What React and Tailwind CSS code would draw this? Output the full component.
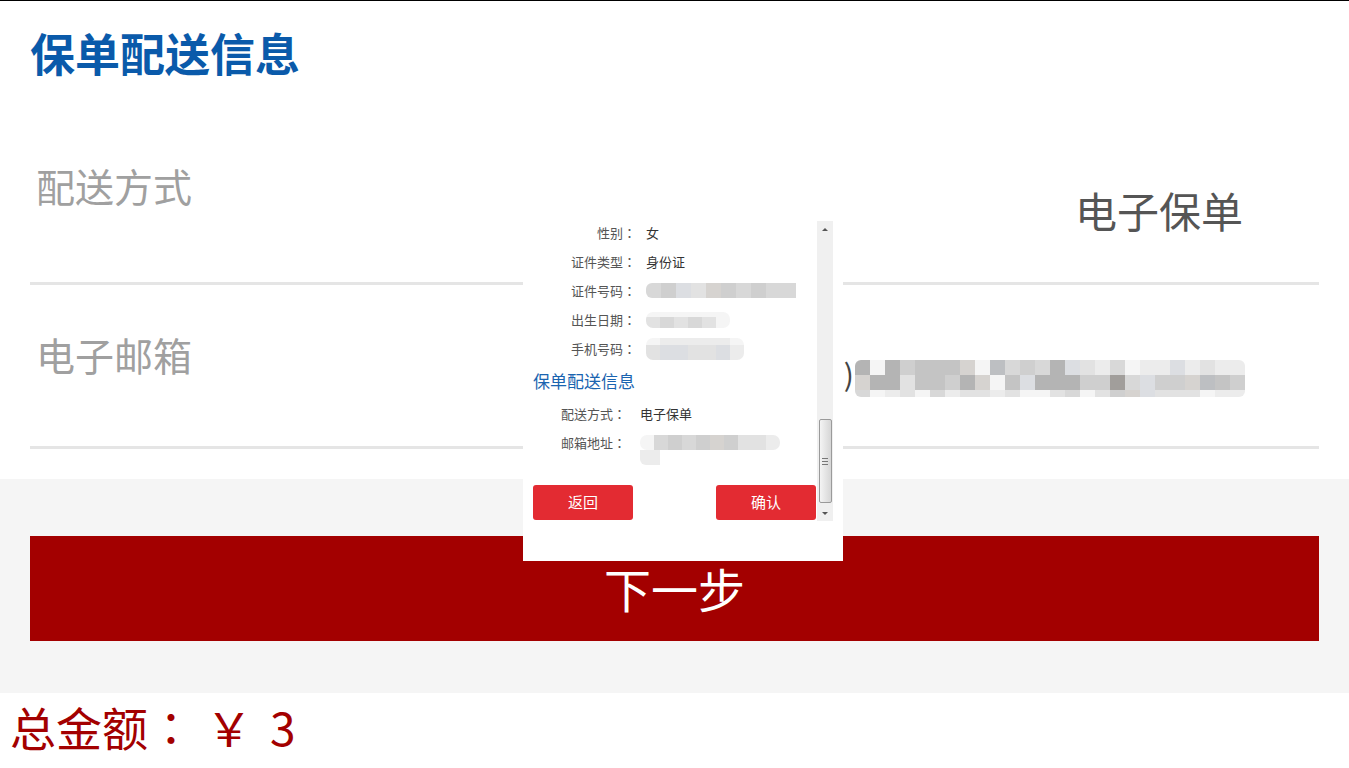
import React from 'react';

const FONT = "font-['Noto_Sans_CJK_SC','Noto_Sans',sans-serif]";

// mosaic palette, used for the blurred (masked) personal data
const P = {
  a: 'bg-[#b4b4b4]',
  b: 'bg-[#c4c4c4]',
  c: 'bg-[#cfcfcf]',
  d: 'bg-[#d8d8d8]',
  e: 'bg-[#e2e2e2]',
  f: 'bg-[#ececec]',
  g: 'bg-[#f5f5f5]',
  h: 'bg-[#a19e9b]',
  i: 'bg-[#dcdee2]',
  j: 'bg-[#bdbfc2]',
  k: 'bg-[#d6d3d0]',
};

function Mosaic({ rows, cell = 'w-[15px]', heights, className = '' }) {
  return (
    <div className={`flex flex-col overflow-hidden ${className}`}>
      {rows.map((row, r) => (
        <div key={r} className="flex">
          {row.split('').map((ch, i) => (
            <div key={i} className={`${cell} ${heights[r]} ${P[ch]}`} />
          ))}
        </div>
      ))}
    </div>
  );
}

function InfoRow({ label, children }) {
  return (
    <div className="flex h-[29px] items-center text-[13px]">
      <div className="w-[113px] text-right text-[#555]">
        {label}
        <span className="font-['Noto_Sans_CJK_TC',sans-serif]">：</span>
      </div>
      <div className="ml-[10px] text-[#333]">{children}</div>
    </div>
  );
}

function Scrollbar() {
  return (
    <div className="flex h-full w-[16px] flex-col items-center bg-[#f0f0f0]">
      <div className="flex h-[16px] w-full items-center justify-center">
        <div className="h-0 w-0 border-x-[3px] border-b-[3px] border-x-transparent border-b-[#555]" />
      </div>
      <div className="flex flex-1 flex-col justify-end px-[1px] pb-[2px]">
        <div className="flex h-[84px] w-[13px] flex-col items-center justify-center gap-[2px] rounded-[2px] border border-[#9a9a9a] bg-gradient-to-r from-[#f4f4f4] to-[#d6d6d6]">
          <div className="h-[1px] w-[6px] bg-[#777]" />
          <div className="h-[1px] w-[6px] bg-[#777]" />
          <div className="h-[1px] w-[6px] bg-[#777]" />
        </div>
      </div>
      <div className="flex h-[16px] w-full items-center justify-center">
        <div className="h-0 w-0 border-x-[3px] border-t-[3px] border-x-transparent border-t-[#555]" />
      </div>
    </div>
  );
}

function ConfirmDialog() {
  return (
    <div className="absolute left-[523px] top-[220px] h-[340px] w-[320px] bg-white">
      <div className="flex h-[300px] w-[310px]">
        <div className="flex flex-1 flex-col">
          <div className="-mt-[3px]">
            <InfoRow label="性别">女</InfoRow>
            <InfoRow label="证件类型">身份证</InfoRow>
            <InfoRow label="证件号码">
              <Mosaic rows={['dciekcdcdd']} heights={['h-[15px]']} className="rounded-l-[6px]" />
            </InfoRow>
            <InfoRow label="出生日期">
              <Mosaic
                rows={['gggggg', 'ededeg']}
                cell="w-[14px]"
                heights={['h-[5px]', 'h-[11px]']}
                className="rounded-[7px]"
              />
            </InfoRow>
            <InfoRow label="手机号码">
              <Mosaic
                rows={['gfffffg', 'eiieeif']}
                cell="w-[14px]"
                heights={['h-[7px]', 'h-[15px]']}
                className="rounded-[7px]"
              />
            </InfoRow>
          </div>
          <div className="flex h-[36px] items-center pl-[10px] text-[17px] text-[#1a64b0]">保单配送信息</div>
          <div className="flex h-[29px] items-center text-[13px]">
            <div className="w-[103px] text-right text-[#555]">
              配送方式<span className="font-['Noto_Sans_CJK_TC',sans-serif]">：</span>
            </div>
            <div className="ml-[14px] text-[#333]">电子保单</div>
          </div>
          <div className="flex h-[29px] items-start pt-[7px] text-[13px]">
            <div className="w-[103px] text-right leading-[15px] text-[#555]">
              邮箱地址<span className="font-['Noto_Sans_CJK_TC',sans-serif]">：</span>
            </div>
            <div className="ml-[14px] flex flex-col">
              <Mosaic rows={['gdcdckceef']} cell="w-[14px]" heights={['h-[15px]']} className="rounded-[7px]" />
              <Mosaic rows={['ff']} cell="w-[10px]" heights={['h-[15px]']} className="rounded-bl-[6px]" />
            </div>
          </div>
          <div className="mt-[28px] flex justify-between pl-[10px] pr-[1px]">
            <button className="h-[35px] w-[100px] rounded-[3px] bg-[#e32b32] text-[15px] text-white">返回</button>
            <button className="h-[35px] w-[100px] rounded-[3px] bg-[#e32b32] text-[15px] text-white">确认</button>
          </div>
        </div>
        <Scrollbar />
      </div>
    </div>
  );
}

export default function App() {
  return (
    <div className={`relative min-h-[768px] w-[1349px] overflow-hidden border-t border-black bg-white ${FONT}`}>
      {/* Title */}
      <div className="h-[99px] px-[30px] pt-[29px]">
        <h1 className="text-[45px] font-bold leading-none text-[#0a5aaa]">保单配送信息</h1>
      </div>

      <div className="px-[30px]">
        {/* Delivery method */}
        <div className="flex h-[182px] items-start justify-between">
          <div className="ml-[6px] mt-[66px] text-[39px] leading-none text-[#a0a0a0]">配送方式</div>
          <div className="mr-[76px] mt-[89px] text-[42px] leading-none text-[#555]">电子保单</div>
        </div>
        <div className="h-[3px] bg-[#e5e5e5]" />

        {/* Email */}
        <div className="flex h-[161px] items-start justify-between">
          <div className="ml-[6px] mt-[50px] text-[39px] leading-none text-[#a0a0a0]">电子邮箱</div>
          <div className="mr-[74px] mt-[75px] flex items-start">
            <span className="-mt-[2px] text-[30px] leading-none text-[#444]">)</span>
            <Mosaic
              rows={['agacbbbkgjdcdaiefdgffifeff', 'kaaebbcakgbiaaacchdicckjbc', 'dgfegdfeefeggedgeckieeegff']}
              heights={['h-[15px]', 'h-[15px]', 'h-[7px]']}
              className="ml-[1px] rounded-[6px]"
            />
          </div>
        </div>
        <div className="h-[3px] bg-[#e5e5e5]" />
      </div>

      <div className="h-[30px]" />

      {/* Action area */}
      <div className="bg-[#f5f5f5] px-[30px] pb-[52px] pt-[57px]">
        <button className="flex h-[105px] w-full items-center justify-center bg-[#a30000] text-[47px] text-white">
          下一步
        </button>
      </div>

      {/* Total */}
      <div className="flex items-baseline px-[10px] pt-[10px] text-[46px] leading-none text-[#a30000]">
        <span>总金额</span>
        <span className="font-['Noto_Sans_CJK_TC',sans-serif]">：</span>
        <span className="ml-[12px]">￥</span>
        <span className="ml-[18px]">3</span>
      </div>

      <ConfirmDialog />
    </div>
  );
}
